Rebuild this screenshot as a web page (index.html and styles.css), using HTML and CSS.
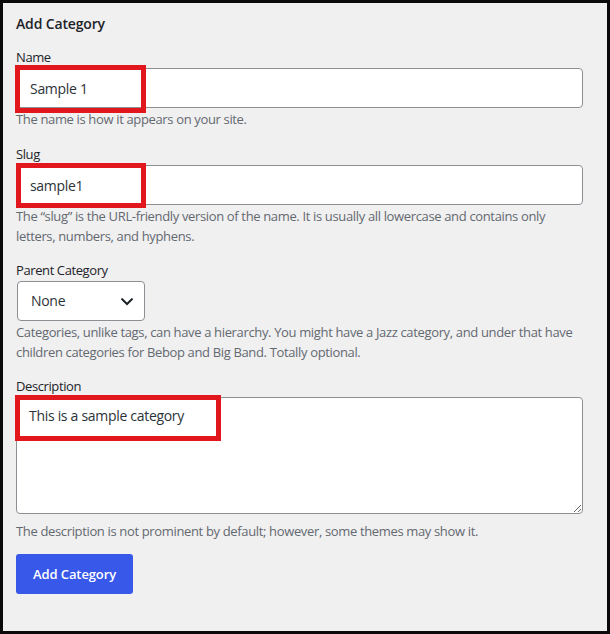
FILE: index.html
```html
<!DOCTYPE html>
<html lang="en">
<head>
<meta charset="utf-8">
<title>Add Category</title>
<link rel="stylesheet" href="styles.css">
</head>
<body>
<div class="panel">
  <h2 class="title">Add Category</h2>

  <div class="field field-name">
    <label class="label" for="tag-name">Name</label>
    <div class="control">
      <input id="tag-name" class="input" type="text" value="Sample 1">
      <span class="mark mark-name"></span>
    </div>
    <p class="help">The name is how it appears on your site.</p>
  </div>

  <div class="field field-slug">
    <label class="label" for="tag-slug">Slug</label>
    <div class="control">
      <input id="tag-slug" class="input" type="text" value="sample1">
      <span class="mark mark-slug"></span>
    </div>
    <p class="help">The “slug” is the URL-friendly version of the name. It is usually all lowercase and contains only letters, numbers, and hyphens.</p>
  </div>

  <div class="field">
    <label class="label" for="parent">Parent Category</label>
    <div class="control select-wrap">
      <select id="parent" class="select">
        <option>None</option>
      </select>
      <svg class="chevron" width="12" height="8" viewBox="0 0 12 8" aria-hidden="true">
        <path d="M1.2 1.3 L6 6 L10.8 1.3" fill="none" stroke="#1d2327" stroke-width="2" stroke-linecap="square"/>
      </svg>
    </div>
    <p class="help">Categories, unlike tags, can have a hierarchy. You might have a Jazz category, and under that have children categories for Bebop and Big Band. Totally optional.</p>
  </div>

  <div class="field">
    <label class="label" for="tag-description">Description</label>
    <div class="control">
      <textarea id="tag-description" class="textarea">This is a sample category</textarea>
      <span class="mark mark-desc"></span>
    </div>
    <p class="help">The description is not prominent by default; however, some themes may show it.</p>
  </div>

  <button class="button" type="button">Add Category</button>
</div>
</body>
</html>
```

FILE: styles.css
```css
* {
  box-sizing: border-box;
}

html, body {
  margin: 0;
  padding: 0;
  background: #000;
}

body {
  font-family: "Open Sans", "Noto Sans", sans-serif;
  color: #1d2327;
}

.panel {
  width: 610px;
  height: 634px;
  border: 3px solid #0a0a0a;
  background: #f0f0f1;
  padding: 11px 24px 0 13px;
}

.title {
  margin: 0;
  font-size: 14px;
  line-height: 20px;
  font-weight: 600;
  letter-spacing: -0.15px;
  color: #1d2327;
}

.field {
  margin-top: 14px;
}

.field-name {
  margin-top: 13px;
}

.field-slug {
  margin-top: 15px;
}

.label {
  display: block;
  font-size: 13px;
  line-height: 20px;
  letter-spacing: -0.4px;
  margin-bottom: 1px;
  color: #1d2327;
}

.control {
  position: relative;
}

.input,
.textarea,
.select {
  display: block;
  font-family: inherit;
  font-size: 14px;
  letter-spacing: -0.3px;
  color: #2c3338;
  background: #fff;
  border: 1px solid #8c8f94;
  border-radius: 4px;
  margin: 0;
  outline: none;
}

.input {
  width: 100%;
  height: 40px;
  padding: 0 13px;
  line-height: 38px;
}

.select-wrap {
  width: 128px;
  margin-left: 1px;
}

.select {
  width: 128px;
  height: 40px;
  padding: 0 30px 0 13px;
  line-height: 38px;
  appearance: none;
  -webkit-appearance: none;
}

.chevron {
  position: absolute;
  right: 12px;
  top: 17px;
  pointer-events: none;
}

.textarea {
  width: 100%;
  height: 117px;
  padding: 8px 12px;
  line-height: 20px;
  resize: vertical;
  margin-bottom: 7px;
}

.mark {
  position: absolute;
  border: 5px solid #e2161d;
  pointer-events: none;
}

.mark-name {
  top: -3px;
  left: -1px;
  width: 131px;
  height: 48px;
}

.mark-slug {
  top: -2px;
  left: 0;
  width: 130px;
  height: 45px;
}

.mark-desc {
  top: -2px;
  left: -1px;
  width: 206px;
  height: 46px;
}

.help {
  margin: 1px 0 0;
  font-size: 13px;
  line-height: 20px;
  letter-spacing: -0.35px;
  color: #646970;
}

.button {
  display: block;
  margin-top: 13px;
  height: 40px;
  padding: 0 17px;
  font-family: inherit;
  font-size: 13px;
  font-weight: 600;
  letter-spacing: -0.1px;
  color: #fff;
  background: #3858e9;
  border: 0;
  border-radius: 3px;
}
```
